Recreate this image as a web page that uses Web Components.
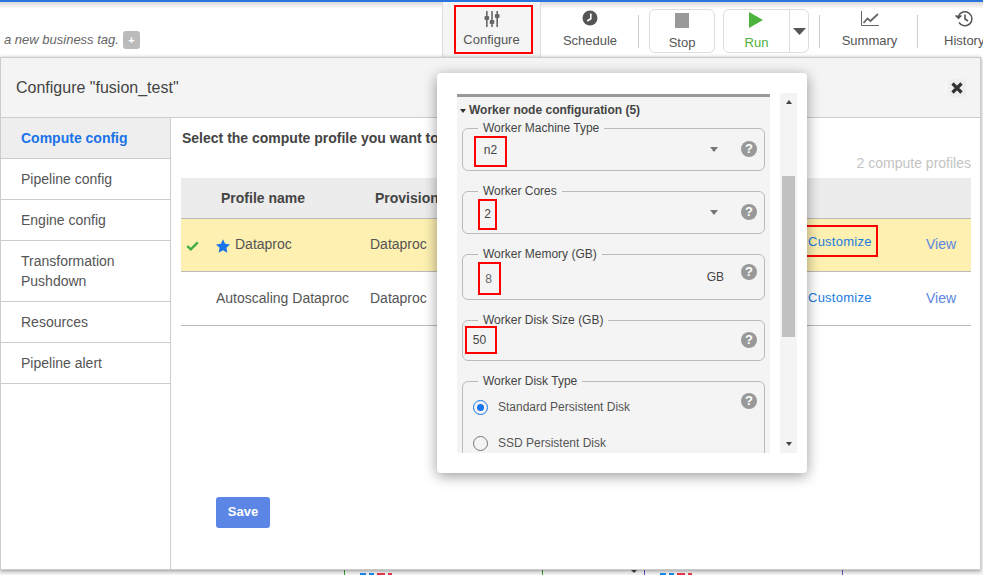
<!DOCTYPE html>
<html>
<head>
<meta charset="utf-8">
<title>Configure</title>
<style>
  html, body { margin: 0; height: 100%; overflow: hidden; }
  body { font-family: "Liberation Sans", Arial, sans-serif; font-size: 14px; color: #444; background: #fff; }
  #page { display: flex; flex-direction: column; height: 575px; width: 983px; }
</style>
</head>
<body>
<div id="page">
  <app-toolbar></app-toolbar>
  <config-modal></config-modal>
  <canvas-strip></canvas-strip>
</div>

<script>
// Red annotation box that wraps a piece of the UI
class RedMark extends HTMLElement {
  constructor() {
    super();
    this.shadow = this.attachShadow({mode: 'open'});
    this.shadow.innerHTML = `<style>
      :host {
        display: inline-flex;
        box-sizing: border-box;
        border: 2px solid #f00;
        align-items: center;
        justify-content: center;
        flex: none;
      }
    </style><slot></slot>`;
  }
}
customElements.define('red-mark', RedMark);

// Toolbar button: icon on top, label under it
class ToolButton extends HTMLElement {
  constructor() {
    super();
    this.shadow = this.attachShadow({mode: 'open'});
    this.shadow.innerHTML = `<style>
      :host {
        display: flex;
        flex-direction: column;
        align-items: center;
        font-size: 13px;
        color: #555;
        flex: none;
      }
      .icon { height: 24px; display: flex; align-items: center; justify-content: center; }
      .label { margin-top: var(--label-gap, 3px); line-height: 16px; white-space: nowrap; }
    </style>
    <div class="icon"><slot name="icon"></slot></div>
    <div class="label"><slot></slot></div>`;
  }
}
customElements.define('tool-button', ToolButton);

class AppToolbar extends HTMLElement {
  constructor() {
    super();
    this.shadow = this.attachShadow({mode: 'open'});
    this.shadow.innerHTML = `<style>
      :host {
        display: flex;
        height: 57px;
        flex: none;
        box-sizing: border-box;
        border-top: 2px solid #2a76dc;
        background: linear-gradient(#d9d9d9, #fff 7px);
        position: relative;
        overflow: hidden;
      }
      .tag {
        width: 442px;
        flex: none;
        display: flex;
        align-items: center;
        padding: 20px 0 0 4px;
        box-sizing: border-box;
        font-size: 13px;
        font-style: italic;
        color: #666;
        white-space: nowrap;
      }
      .plus {
        margin-left: 4px;
        width: 17px;
        height: 18px;
        background: #bbb;
        border-radius: 3px;
        color: #fff;
        font-style: normal;
        font-weight: bold;
        font-size: 11px;
        display: flex;
        align-items: center;
        justify-content: center;
      }
      .configure {
        width: 97px;
        flex: none;
        box-sizing: content-box;
        border-left: 1px solid #ddd;
        border-right: 1px solid #ddd;
        background: #f5f5f5;
        display: flex;
        justify-content: center;
        padding-top: 3px;
        height: 52px;
        --label-gap: 1px;
      }
      red-mark { width: 79px; height: 49px; margin-left: 3px; align-items: flex-start; }
      red-mark tool-button { margin: 0 3px 0 0; }
      .sep { width: 1px; height: 33px; background: #ccc; flex: none; margin-top: 13px; }
      .plain { padding-top: 4px; }
      .schedule { width: 96px; margin-left: 1px; }
      .boxed {
        flex: none;
        box-sizing: border-box;
        height: 44px;
        margin-top: 7px;
        border: 1px solid #ddd;
        border-radius: 6px;
        display: flex;
      }
      .stop { width: 66px; margin-left: 10px; justify-content: center; }
      .run { width: 86px; margin-left: 8px; margin-right: 10px; }
      .run-main { width: 65px; display: flex; justify-content: center; border-right: 1px solid #ddd; }
      .run-caret { flex: 1; display: flex; align-items: center; justify-content: center; }
      .boxed tool-button { margin-top: -2px; }
      .run-label { color: #4caf3a; }
      .summary { width: 95px; padding-left: 2px; }
      .history { margin-left: 26px; }
    </style>
    <div class="tag">a new business tag.<span class="plus">+</span></div>
    <div class="configure">
      <red-mark>
        <tool-button>
          <svg slot="icon" width="16" height="18" viewBox="0 0 16 18" fill="#666">
            <rect x="2" y="1" width="1.6" height="16"/><rect x="7.2" y="1" width="1.6" height="16"/><rect x="12.4" y="1" width="1.6" height="16"/>
            <rect x="0.5" y="6" width="4.6" height="4" rx="1"/><rect x="5.7" y="10" width="4.6" height="4" rx="1"/><rect x="10.9" y="4" width="4.6" height="4" rx="1"/>
          </svg>
          Configure
        </tool-button>
      </red-mark>
    </div>
    <tool-button class="plain schedule">
      <svg slot="icon" width="16" height="16" viewBox="0 0 16 16">
        <circle cx="8" cy="8" r="7.5" fill="#555"/>
        <path d="M8.8 3.5v5.2L5.2 11" fill="none" stroke="#fff" stroke-width="1.6"/>
      </svg>
      Schedule
    </tool-button>
    <div class="sep"></div>
    <div class="boxed stop">
      <tool-button>
        <svg slot="icon" width="14" height="15" viewBox="0 0 14 15"><rect width="14" height="15" fill="#999"/></svg>
        Stop
      </tool-button>
    </div>
    <div class="boxed run">
      <div class="run-main">
        <tool-button>
          <svg slot="icon" width="14" height="16" viewBox="0 0 14 16"><path d="M0 0l14 8-14 8z" fill="#4cb33c"/></svg>
          <span class="run-label">Run</span>
        </tool-button>
      </div>
      <div class="run-caret">
        <svg width="13" height="7" viewBox="0 0 13 7"><path d="M0 0h13L6.5 7z" fill="#555"/></svg>
      </div>
    </div>
    <div class="sep"></div>
    <tool-button class="plain summary">
      <svg slot="icon" width="18" height="15" viewBox="0 0 18 15" fill="none" stroke="#666">
        <path d="M.5 0v14.5H18" stroke-width="1"/>
        <path d="M2.5 12l4-4.5 3 2.5L17 3" stroke-width="1.8"/>
      </svg>
      Summary
    </tool-button>
    <div class="sep"></div>
    <tool-button class="plain history">
      <svg slot="icon" width="18" height="17" viewBox="0 0 18 17" fill="none" stroke="#555" stroke-width="1.5">
        <path d="M3.5 6A7 7 0 1 1 4 12.5"/>
        <path d="M0.5 5.5L3.5 8.5 6.5 5.5" stroke-width="1.2" fill="#555"/>
        <path d="M10 4.5V9l3 2" stroke-width="1.6"/>
      </svg>
      History
    </tool-button>`;
  }
}
customElements.define('app-toolbar', AppToolbar);

class SideNav extends HTMLElement {
  constructor() {
    super();
    this.shadow = this.attachShadow({mode: 'open'});
    const items = ['Compute config', 'Pipeline config', 'Engine config', 'Transformation Pushdown', 'Resources', 'Pipeline alert'];
    this.shadow.innerHTML = `<style>
      :host {
        display: block;
        width: 169px;
        flex: none;
        box-sizing: content-box;
        border-right: 1px solid #ccc;
      }
      .item {
        padding: 10px 20px;
        line-height: 20px;
        border-bottom: 1px solid #ccc;
        color: #555;
        font-size: 14px;
      }
      .active { background: #eee; color: #1a73e8; font-weight: bold; }
    </style>` + items.map((t, i) => `<div class="item ${i === 0 ? 'active' : ''}">${t}</div>`).join('');
  }
}
customElements.define('side-nav', SideNav);

class ProfileTable extends HTMLElement {
  constructor() {
    super();
    this.shadow = this.attachShadow({mode: 'open'});
    const star = `<svg width="14" height="14" viewBox="0 0 24 23"><path d="M12 0l3.6 7.8 8.4 1-6.2 5.8 1.7 8.4L12 18.8 4.5 23l1.7-8.4L0 8.8l8.4-1z" fill="#1a73e8"/></svg>`;
    const check = `<svg width="13" height="10" viewBox="0 0 13 10"><path d="M1.2 5l3.6 3.4L11.8 1.4" fill="none" stroke="#3fae3f" stroke-width="2.4"/></svg>`;
    this.shadow.innerHTML = `<style>
      :host { display: block; width: 790px; color: #555; font-size: 14px; }
      .row {
        display: grid;
        grid-template-columns: 35px 154px 438px 118px 45px;
        align-items: center;
        box-sizing: border-box;
        border-bottom: 1px solid #bbb;
      }
      .head { height: 41px; background: #ececec; font-weight: bold; color: #444; }
      .head .p { padding-left: 5px; }
      .head .q { padding-left: 5px; }
      .sel { height: 53px; background: #fdf0b0; padding-bottom: 2px; }
      .other { height: 54px; padding-bottom: 2px; }
      .mark { padding-left: 5px; display: flex; align-items: center; margin-top: 4px; }
      .name { display: flex; align-items: center; gap: 5px; white-space: nowrap; }
      .name svg { margin-top: 4px; }
      a { color: #1a7be0; font-size: 13px; letter-spacing: .25px; }
      .view { color: #5b85e0; font-size: 14px; }
      .cust { margin-left: -4px; display: flex; }
      .sel .cust { align-self: start; margin-top: 6px; }
      red-mark { width: 74px; height: 32px; justify-content: flex-start; padding: 1px 0 0 2px; }
      .other .cust { margin-left: 0; }
    </style>
    <div class="row head"><span></span><span class="p">Profile name</span><span class="q">Provisioner</span><span></span><span></span></div>
    <div class="row sel">
      <span class="mark">${check}</span>
      <span class="name">${star}Dataproc</span>
      <span>Dataproc</span>
      <span class="cust"><red-mark><a>Customize</a></red-mark></span>
      <span class="view">View</span>
    </div>
    <div class="row other">
      <span></span>
      <span class="name">Autoscaling Dataproc</span>
      <span>Dataproc</span>
      <span class="cust"><a>Customize</a></span>
      <span class="view">View</span>
    </div>`;
  }
}
customElements.define('profile-table', ProfileTable);

// Outlined field with a legend on its border and the help mark at its right
class FieldBox extends HTMLElement {
  constructor() {
    super();
    this.shadow = this.attachShadow({mode: 'open'});
    const label = this.getAttribute('label');
    this.shadow.innerHTML = `<style>
      :host { display: block; font-size: 12px; color: #444; margin: 0 5px 13px; }
      fieldset {
        margin: 0;
        padding: 0 7px 0 0;
        border: 1px solid #bbb;
        border-radius: 6px;
        box-sizing: border-box;
        height: var(--h, 50px);
        min-width: 0;
        position: relative;
      }
      legend { margin-left: 15px; padding: 0 5px; line-height: 14px; font-size: 12px; color: #444; }
      .row { display: flex; align-items: center; height: var(--row, 100%); }
      .content { flex: 1; display: flex; align-items: center; min-width: 0; padding-left: var(--pad, 11px); }
      .help {
        width: 16px;
        height: 16px;
        border-radius: 50%;
        background: #999;
        color: #fff;
        font-size: 13px;
        font-weight: bold;
        text-align: center;
        line-height: 16px;
        flex: none;
        margin-top: var(--help-top, -7px);
        align-self: var(--help-align, center);
      }
      .suffix { margin: 0 17px 6px 0; }
      .caret { width: 0; height: 0; border: 4.5px solid transparent; border-top: 5px solid #777; border-bottom: 0; margin: 0 23px 7px 0; }
    </style>
    <fieldset>
      <legend>${label}</legend>
      <div class="row">
        <div class="content"><slot></slot></div>
        ${this.hasAttribute('select') ? '<span class="caret"></span>' : ''}
        ${this.hasAttribute('unit') ? `<span class="suffix">${this.getAttribute('unit')}</span>` : ''}
        <span class="help">?</span>
      </div>
    </fieldset>`;
  }
}
customElements.define('field-box', FieldBox);

class RadioOption extends HTMLElement {
  constructor() {
    super();
    this.shadow = this.attachShadow({mode: 'open'});
    const on = this.hasAttribute('checked');
    this.shadow.innerHTML = `<style>
      :host { display: flex; align-items: center; height: 36px; font-size: 12px; color: #555; gap: 10px; }
      .dot {
        width: 15px; height: 15px; box-sizing: border-box; border-radius: 50%;
        border: 1.5px solid ${on ? '#1a73e8' : '#777'};
        display: flex; align-items: center; justify-content: center; flex: none;
      }
      .dot i { width: 7px; height: 7px; border-radius: 50%; background: #1a73e8; display: ${on ? 'block' : 'none'}; }
    </style><span class="dot"><i></i></span><slot></slot>`;
  }
}
customElements.define('radio-option', RadioOption);

class WorkerPopup extends HTMLElement {
  constructor() {
    super();
    this.shadow = this.attachShadow({mode: 'open'});
    this.shadow.innerHTML = `<style>
      :host {
        position: absolute;
        left: 436px;
        top: 15px;
        width: 370px;
        height: 400px;
        box-sizing: border-box;
        padding: 21px 10px 20px 20px;
        background: #fff;
        border-radius: 4px;
        box-shadow: 0 3px 14px rgba(0,0,0,.4);
        display: flex;
        gap: 10px;
      }
      .panel {
        width: 313px;
        flex: none;
        box-sizing: border-box;
        border-top: 3px solid #999;
        background: #f4f4f4;
        overflow: hidden;
      }
      h4 {
        margin: 0 0 -1px;
        height: 25px;
        display: flex;
        align-items: center;
        font-size: 12px;
        font-weight: bold;
        color: #444;
        padding-left: 3px;
        gap: 3px;
        box-sizing: border-box;
      }
      h4 i { width: 0; height: 0; border: 3px solid transparent; border-top: 4px solid #333; border-bottom: 0; margin-top: 2px; }
      .bar { width: 17px; flex: none; background: #f4f4f4; margin-top: -1px; display: flex; flex-direction: column; }
      .arrow { height: 18px; display: flex; align-items: center; justify-content: center; flex: none; }
      .arrow i { width: 0; height: 0; border: 3.5px solid transparent; }
      .up i { border-bottom: 4px solid #444; border-top: 0; }
      .down i { border-top: 4px solid #444; border-bottom: 0; }
      .track { flex: 1; padding: 65px 2px 98px; display: flex; }
      .thumb { flex: 1; background: #c1c1c1; }
      red-mark { color: #444; }
      .n2 { width: 33px; height: 31px; padding-bottom: 2px; margin-top: -3px; }
      .two { width: 19px; height: 31px; margin: -3px 0 0 4px; }
      .eight { width: 23px; height: 33px; margin: -3px 0 0 4px; padding-right: 2px; color: #666; }
      .fifty { width: 32px; height: 28px; margin: -2px 0 6px; padding-right: 3px; }
      .radios { width: 100%; margin-top: 1px; }
    </style>
    <div class="panel">
      <h4><i></i>Worker node configuration (5)</h4>
      <field-box label="Worker Machine Type" select><red-mark class="n2">n2</red-mark></field-box>
      <field-box label="Worker Cores" select><red-mark class="two">2</red-mark></field-box>
      <field-box label="Worker Memory (GB)" unit="GB" style="--h:53px;--help-top:-16px"><red-mark class="eight">8</red-mark></field-box>
      <field-box label="Worker Disk Size (GB)" style="--h:48px;--pad:2px;--help-top:-7px"><red-mark class="fifty">50</red-mark></field-box>
      <field-box label="Worker Disk Type" style="--h:110px;--row:auto;--pad:10px;--help-top:5px;--help-align:flex-start">
        <div class="radios">
          <radio-option checked>Standard Persistent Disk</radio-option>
          <radio-option>SSD Persistent Disk</radio-option>
        </div>
      </field-box>
    </div>
    <div class="bar">
      <div class="arrow up"><i></i></div>
      <div class="track"><div class="thumb"></div></div>
      <div class="arrow down"><i></i></div>
    </div>`;
  }
}
customElements.define('worker-popup', WorkerPopup);

class ConfigModal extends HTMLElement {
  constructor() {
    super();
    this.shadow = this.attachShadow({mode: 'open'});
    this.shadow.innerHTML = `<style>
      :host {
        display: flex;
        flex-direction: column;
        box-sizing: border-box;
        width: 981px;
        height: 513px;
        border: 1px solid #ccc;
        background: #fff;
        position: relative;
        flex: none;
        box-shadow: 0 1px 4px rgba(0,0,0,.4);
        z-index: 1;
      }
      header {
        height: 60px;
        flex: none;
        box-sizing: border-box;
        background: #f4f4f4;
        border-bottom: 1px solid #ccc;
        display: flex;
        align-items: center;
        justify-content: space-between;
        padding: 0 14px 0 15px;
        font-size: 16px;
        color: #444;
      }
      .close { width: 18px; height: 18px; display: flex; align-items: center; justify-content: center; background: #efefef; border-radius: 3px; }
      .body { flex: 1; display: flex; min-height: 0; }
      main { flex: 1; padding: 12px 0 0 10px; min-width: 0; }
      .lead { font-weight: bold; color: #444; font-size: 14px; line-height: 16px; white-space: nowrap; margin-left: 1px; }
      .count { text-align: right; color: #c4c4c4; font-size: 14px; line-height: 16px; margin: 9px 9px 7px 0; }
      .save {
        margin: 171px 0 0 35px;
        width: 54px;
        height: 31px;
        border-radius: 3px;
        background: #5b86e5;
        color: #fff;
        font-size: 13px;
        font-weight: bold;
        display: flex;
        align-items: center;
        justify-content: center;
        padding-bottom: 2px;
        box-sizing: border-box;
      }
    </style>
    <header>
      <span>Configure "fusion_test"</span>
      <span class="close"><svg width="12" height="12" viewBox="0 0 12 12"><path d="M1.5 1.5l9 9M10.5 1.5l-9 9" stroke="#333" stroke-width="3.2"/></svg></span>
    </header>
    <div class="body">
      <side-nav></side-nav>
      <main>
        <div class="lead">Select the compute profile you want to</div>
        <div class="count">2 compute profiles</div>
        <profile-table></profile-table>
        <div class="save">Save</div>
      </main>
    </div>
    <worker-popup></worker-popup>`;
  }
}
customElements.define('config-modal', ConfigModal);

// What is left of the pipeline canvas under the modal
class CanvasStrip extends HTMLElement {
  constructor() {
    super();
    this.shadow = this.attachShadow({mode: 'open'});
    this.shadow.innerHTML = `<style>
      :host { display: block; flex: 1; background: #f4f4f4; position: relative; overflow: hidden; }
      .node { position: absolute; top: 0; bottom: 0; width: 197px; border-left: 1px solid; border-right: 1px solid; padding-top: 3px; }
      .green { left: 344px; border-color: #3a9a2e; }
      .purple { left: 644px; border-color: #6a4cc0; }
      .node i { display: inline-block; height: 2px; margin-left: 3px; vertical-align: top; }
      .node i:first-child { margin-left: 15px; }
      .tip { position: absolute; left: 631px; top: 0; border: 3px solid transparent; border-top: 3px solid #444; }
    </style>
    <div class="node green"><i style="width:6px;background:#1a8ae8"></i><i style="width:5px;background:#1a8ae8"></i><i style="width:8px;background:#e83a4c"></i><i style="width:4px;background:#e83a4c"></i></div>
    <span class="tip"></span>
    <div class="node purple"><i style="width:6px;background:#1a8ae8"></i><i style="width:5px;background:#1a8ae8"></i><i style="width:8px;background:#e83a4c"></i><i style="width:4px;background:#e83a4c"></i></div>`;
  }
}
customElements.define('canvas-strip', CanvasStrip);
</script>
</body>
</html>
